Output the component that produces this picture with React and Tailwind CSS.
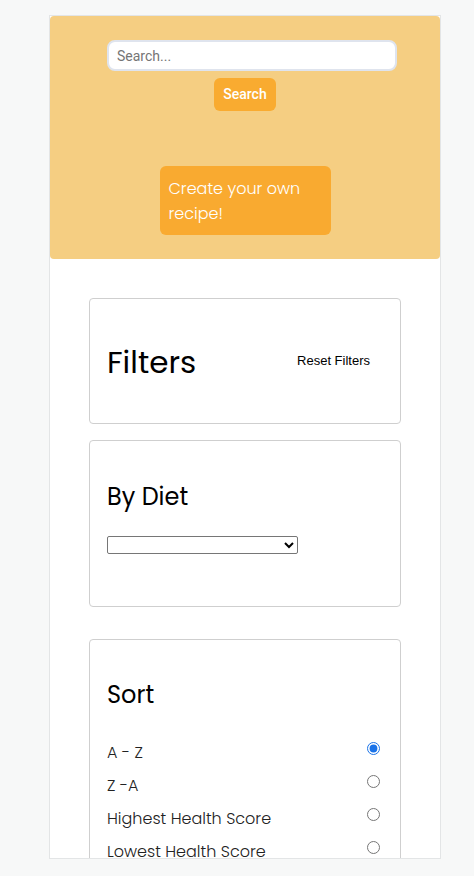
import React, { useState } from 'react';

const sortOptions = ['A - Z', 'Z -A', 'Highest Health Score', 'Lowest Health Score'];

export default function App() {
  const [sort, setSort] = useState('A - Z');

  return (
    <div className="min-h-[876px] bg-[#f7f8f8] pt-[15px]" style={{ fontFamily: "Poppins, 'Open Sans', sans-serif" }}>
      <div className="ml-[49px] w-[392px] h-[844px] overflow-hidden border border-[#e3e5e6] bg-white">
        {/* Header */}
        <div className="h-[243px] bg-[#f5ce82] rounded-[4px] flex flex-col items-center pt-[24px]">
          <input
            type="text"
            placeholder="Search..."
            className="self-start ml-[57px] w-[290px] h-[31px] rounded-[8px] border-2 border-[#dfe4ee] bg-white px-[8px] text-[14px] text-[#333] placeholder:text-[#757575] outline-none"
            style={{ fontFamily: "Roboto, 'Liberation Sans', sans-serif" }}
          />
          <button
            className="mt-[7px] h-[33px] px-[9px] rounded-[6px] bg-[#f9ab30] text-white text-[14px] font-medium"
            style={{ fontFamily: "Roboto, 'Liberation Sans', sans-serif" }}
          >
            Search
          </button>
          <button className="mt-[55px] w-[171px] h-[69px] rounded-[6px] bg-[#f9aa30] text-white text-[16px] leading-[25px] text-left px-[9px] font-light">
            Create your own recipe!
          </button>
        </div>

        {/* Filters */}
        <div className="px-[39px] pt-[39px] flex flex-col gap-[16px]">
          <div className="h-[126px] border border-[#cfcfcf] rounded-[4px] flex items-center justify-between pl-[17px] pr-[30px]">
            <h1 className="text-[31px] text-black pt-[2px]">Filters</h1>
            <button className="text-[13px] text-black" style={{ fontFamily: "'Liberation Sans', Arial, sans-serif" }}>
              Reset Filters
            </button>
          </div>

          <div className="h-[167px] border border-[#cfcfcf] rounded-[4px] pl-[17px] pt-[38px]">
            <h2 className="text-[24px] text-black leading-[36px]">By Diet</h2>
            <select className="mt-[21px] w-[191px] h-[18px] border border-[#767676] rounded-[2px] text-[13px] bg-white" />
          </div>

          <div className="mt-[16px] h-[300px] border border-[#cfcfcf] rounded-[4px] pl-[17px] pr-[20px] pt-[37px]">
            <h2 className="text-[24px] text-black leading-[36px]">Sort</h2>
            <div className="mt-[28px] flex flex-col gap-[9px]">
              {sortOptions.map((opt) => (
                <label key={opt} className="flex items-start justify-between h-[24px] text-[16px] leading-[24px] font-light text-[#222]">
                  <span>{opt}</span>
                  <input
                    type="radio"
                    name="sort"
                    checked={sort === opt}
                    onChange={() => setSort(opt)}
                    className="mt-[1px] w-[13px] h-[13px] accent-[#1a73e8]"
                  />
                </label>
              ))}
            </div>
          </div>
        </div>
      </div>
    </div>
  );
}
